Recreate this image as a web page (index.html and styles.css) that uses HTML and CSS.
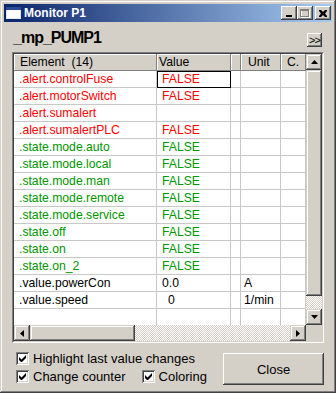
FILE: index.html
```html
<!DOCTYPE html>
<html lang="en">
  <head>
    <meta charset="utf-8" />
    <title>Monitor P1</title>
    <link rel="stylesheet" href="styles.css">
  </head>
  <body>
    <div class="window">
      <div class="titlebar">
        <svg class="app-icon" width="16" height="13" viewBox="0 0 16 13">
          <rect x="0.5" y="0.5" width="14" height="11" fill="#fff" stroke="#dfe6f4" />
          <rect x="0" y="0" width="15" height="3" fill="#2a4a9a" />
          <rect x="1" y="3" width="13" height="8" fill="#fff" />
        </svg>
        <span class="title">Monitor P1</span>
        <div class="caption-buttons">
          <span class="cap-btn">
            <svg width="8" height="7" viewBox="0 0 8 7"><rect x="1" y="5" width="6" height="2" fill="#000" /></svg>
          </span>
          <span class="cap-btn">
            <svg width="10" height="9" viewBox="0 0 10 9">
              <rect x="1.5" y="1.5" width="8" height="7" fill="none" stroke="#fff" />
              <rect x="0.5" y="0.5" width="8" height="7" fill="none" stroke="#808080" />
              <rect x="1" y="1" width="7" height="1" fill="#808080" />
            </svg>
          </span>
          <span class="cap-btn close">
            <svg width="8" height="7" viewBox="0 0 8 7">
              <path d="M0 0h2l2 2 2-2h2v1l-2 2.5 2 2.5v1h-2l-2-2-2 2h-2v-1l2-2.5-2-2.5z" fill="#000" />
            </svg>
          </span>
        </div>
      </div>

      <div class="content">
        <div class="head">
          <h1>_mp_PUMP1</h1>
          <button class="more">&gt;&gt;</button>
        </div>

        <div class="grid">
          <div class="grid-inner">
            <div class="grid-main">
              <div class="table-wrap">
                <table>
                  <colgroup>
                    <col class="c-element" />
                    <col class="c-value" />
                    <col class="c-blank" />
                    <col class="c-unit" />
                    <col class="c-count" />
                  </colgroup>
                  <thead>
                    <tr>
                      <th class="th-element">Element&nbsp; (14)</th>
                      <th class="th-value">Value</th>
                      <th></th>
                      <th class="th-unit">Unit</th>
                      <th class="th-count">C.</th>
                    </tr>
                  </thead>
                  <tbody>
                    <tr class="alert"><td>.alert.controlFuse</td><td class="val selected">FALSE</td><td></td><td></td><td></td></tr>
                    <tr class="alert"><td>.alert.motorSwitch</td><td class="val">FALSE</td><td></td><td></td><td></td></tr>
                    <tr class="alert"><td>.alert.sumalert</td><td class="val"></td><td></td><td></td><td></td></tr>
                    <tr class="alert"><td>.alert.sumalertPLC</td><td class="val">FALSE</td><td></td><td></td><td></td></tr>
                    <tr class="state"><td>.state.mode.auto</td><td class="val">FALSE</td><td></td><td></td><td></td></tr>
                    <tr class="state"><td>.state.mode.local</td><td class="val">FALSE</td><td></td><td></td><td></td></tr>
                    <tr class="state"><td>.state.mode.man</td><td class="val">FALSE</td><td></td><td></td><td></td></tr>
                    <tr class="state"><td>.state.mode.remote</td><td class="val">FALSE</td><td></td><td></td><td></td></tr>
                    <tr class="state"><td>.state.mode.service</td><td class="val">FALSE</td><td></td><td></td><td></td></tr>
                    <tr class="state"><td>.state.off</td><td class="val">FALSE</td><td></td><td></td><td></td></tr>
                    <tr class="state"><td>.state.on</td><td class="val">FALSE</td><td></td><td></td><td></td></tr>
                    <tr class="state"><td>.state.on_2</td><td class="val">FALSE</td><td></td><td></td><td></td></tr>
                    <tr><td>.value.powerCon</td><td class="val">0.0</td><td></td><td class="unit">A</td><td></td></tr>
                    <tr><td>.value.speed</td><td class="val indent">0</td><td></td><td class="unit">1/min</td><td></td></tr>
                    <tr><td></td><td></td><td></td><td></td><td></td></tr>
                    <tr><td></td><td></td><td></td><td></td><td></td></tr>
                  </tbody>
                </table>
              </div>

              <div class="vscroll">
                <span class="sb-btn">
                  <svg width="7" height="4" viewBox="0 0 7 4"><path d="M3.5 0L7 4H0z" fill="#000" /></svg>
                </span>
                <span class="sb-thumb v-thumb"></span>
                <span class="sb-track"></span>
                <span class="sb-btn">
                  <svg width="7" height="4" viewBox="0 0 7 4"><path d="M0 0h7L3.5 4z" fill="#000" /></svg>
                </span>
              </div>
            </div>

            <div class="hscroll">
              <span class="sb-btn">
                <svg width="4" height="7" viewBox="0 0 4 7"><path d="M4 0v7L0 3.5z" fill="#000" /></svg>
              </span>
              <span class="sb-thumb h-thumb"></span>
              <span class="sb-track"></span>
              <span class="sb-btn">
                <svg width="4" height="7" viewBox="0 0 4 7"><path d="M0 0v7L4 3.5z" fill="#000" /></svg>
              </span>
              <span class="corner"></span>
            </div>
          </div>
        </div>

        <div class="footer">
          <div class="options">
            <label class="check">
              <span class="box"><svg width="7" height="7" viewBox="0 0 7 7"><path d="M0 2v3l2 2h1l4-4V0L2.5 4.5z" fill="#000" /></svg></span>
              Highlight last value changes
            </label>
            <div class="option-row">
              <label class="check">
                <span class="box"><svg width="7" height="7" viewBox="0 0 7 7"><path d="M0 2v3l2 2h1l4-4V0L2.5 4.5z" fill="#000" /></svg></span>
                Change counter
              </label>
              <label class="check coloring">
                <span class="box"><svg width="7" height="7" viewBox="0 0 7 7"><path d="M0 2v3l2 2h1l4-4V0L2.5 4.5z" fill="#000" /></svg></span>
                Coloring
              </label>
            </div>
          </div>
          <button class="close-btn">Close</button>
        </div>
      </div>
    </div>
  </body>
</html>
```

FILE: styles.css
```css
body {
  margin: 0;
  background: #d4d0c8;
}

.window {
  width: 336px;
  height: 393px;
  box-sizing: border-box;
  padding: 4px;
  background: #d4d0c8;
  box-shadow: inset -1px -1px #404040, inset 1px 1px #d4d0c8,
    inset -2px -2px #808080, inset 2px 2px #fff;
  font-family: "Liberation Sans", Arial, sans-serif;
  color: #000;
}

/* title bar */
.titlebar {
  display: flex;
  align-items: center;
  height: 18px;
  padding: 0 1px 0 2px;
  background: linear-gradient(90deg, #0a246a, #a6caf0);
}

.app-icon {
  display: block;
  margin-right: 2px;
}

.title {
  color: #fff;
  font-weight: bold;
  font-size: 12px;
  flex: 1;
}

.caption-buttons {
  display: flex;
  align-items: center;
}

.cap-btn {
  display: flex;
  align-items: center;
  justify-content: center;
  width: 16px;
  height: 14px;
  box-sizing: border-box;
  background: #d4d0c8;
  box-shadow: inset -1px -1px #404040, inset 1px 1px #fff,
    inset -2px -2px #808080, inset 2px 2px #d4d0c8;
}

.cap-btn.close {
  margin-left: 2px;
}

/* content */
.content {
  padding: 0 8px;
}

.head {
  display: flex;
  justify-content: space-between;
  align-items: flex-start;
  height: 30px;
  box-sizing: border-box;
  padding-top: 7px;
}

.head h1 {
  margin: 0 0 0 1px;
  font-size: 16px;
  line-height: 18px;
  letter-spacing: -1px;
  font-weight: bold;
}

.more {
  width: 15px;
  height: 14px;
  margin: 4px 2px 0 0;
  padding: 0 0 1px;
  border: 0;
  background: #d4d0c8;
  font-family: "Liberation Sans", Arial, sans-serif;
  font-size: 11px;
  line-height: 12px;
  letter-spacing: -1px;
  color: #000;
  box-shadow: inset -1px -1px #404040, inset 1px 1px #fff,
    inset -2px -2px #808080, inset 2px 2px #d4d0c8;
}

/* grid */
.grid {
  border: 1px solid;
  border-color: #808080 #fff #fff #808080;
}

.grid-inner {
  border: 1px solid;
  border-color: #404040 #d4d0c8 #d4d0c8 #404040;
}

.grid-main {
  display: flex;
  height: 271px;
}

.table-wrap {
  width: 292px;
  height: 271px;
  overflow: hidden;
  background: #fff;
}

table {
  table-layout: fixed;
  width: 292px;
  border-collapse: separate;
  border-spacing: 0;
  font-size: 12.2px;
}

.c-element { width: 143px; }
.c-value { width: 74px; }
.c-blank { width: 10px; }
.c-unit { width: 40px; }
.c-count { width: 25px; }

th,
td {
  box-sizing: border-box;
  height: 17px;
  padding: 0;
  line-height: 16px;
  white-space: nowrap;
  overflow: hidden;
  text-align: left;
  font-weight: normal;
}

th {
  background: #d4d0c8;
  border-right: 1px solid #808080;
  border-bottom: 1px solid #808080;
  box-shadow: inset 1px 1px #fff;
}

.th-element { padding-left: 6px; }
.th-value { padding-left: 2px; }
.th-unit { padding-left: 7px; }
.th-count { padding-left: 6px; }

td {
  border-right: 1px solid #c8c8c8;
  border-bottom: 1px solid #c8c8c8;
  padding-left: 5px;
}

td.unit {
  padding-left: 3px;
}

td.indent {
  padding-left: 11px;
}

td.selected {
  outline: 1px solid #000;
  outline-offset: -1px;
}

tr.alert td {
  color: #f00;
}

tr.state td {
  color: #009600;
}

/* scrollbars */
.sb-btn {
  display: flex;
  align-items: center;
  justify-content: center;
  flex: none;
  width: 16px;
  height: 16px;
  box-sizing: border-box;
  background: #d4d0c8;
  box-shadow: inset -1px -1px #404040, inset 1px 1px #d4d0c8,
    inset -2px -2px #808080, inset 2px 2px #fff;
}

.sb-thumb {
  display: block;
  flex: none;
  background: #d4d0c8;
  box-shadow: inset -1px -1px #404040, inset 1px 1px #d4d0c8,
    inset -2px -2px #808080, inset 2px 2px #fff;
}

.sb-track {
  display: block;
  flex: 1;
  background: repeating-conic-gradient(#d4d0c8 0 25%, #fff 0 50%) 0 0 / 2px 2px;
}

.vscroll {
  display: flex;
  flex-direction: column;
  width: 16px;
}

.v-thumb {
  height: 226px;
}

.hscroll {
  display: flex;
  height: 16px;
}

.h-thumb {
  width: 105px;
}

.corner {
  display: block;
  width: 16px;
  background: #d4d0c8;
}

/* footer */
.footer {
  display: flex;
  justify-content: space-between;
  align-items: flex-start;
  padding: 9px 0 0 4px;
}

.options {
  display: flex;
  flex-direction: column;
  gap: 5px;
}

.option-row {
  display: flex;
}

.check {
  display: flex;
  align-items: center;
  gap: 4px;
  height: 13px;
  font-size: 13px;
}

.check.coloring {
  margin-left: 16px;
}

.box {
  display: flex;
  align-items: center;
  justify-content: center;
  width: 13px;
  height: 13px;
  box-sizing: border-box;
  background: #fff;
  box-shadow: inset 1px 1px #808080, inset -1px -1px #fff,
    inset 2px 2px #404040, inset -2px -2px #d4d0c8;
}

.close-btn {
  width: 101px;
  height: 32px;
  margin-top: 1px;
  padding: 0;
  border: 0;
  background: #d4d0c8;
  font-family: "Liberation Sans", Arial, sans-serif;
  font-size: 13px;
  color: #000;
  box-shadow: inset -1px -1px #404040, inset 1px 1px #fff,
    inset -2px -2px #808080, inset 2px 2px #d4d0c8;
}
```
